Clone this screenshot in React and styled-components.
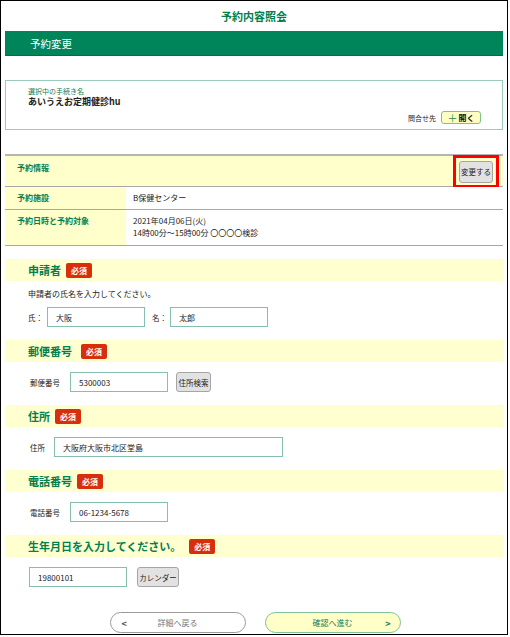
import React from 'react';
import styled, { createGlobalStyle } from 'styled-components';

const GlobalStyle = createGlobalStyle`
  body {
    margin: 0;
    background: #fff;
    font-family: "Noto Sans CJK JP", "Noto Sans", sans-serif;
    color: #222;
  }
`;

const Frame = styled.div`
  box-sizing: border-box;
  width: 508px;
  height: 635px;
  border: 1px solid #000;
  padding: 0 4px;
  overflow: hidden;
`;

const PageTitle = styled.h1`
  margin: 0;
  height: 30px;
  display: flex;
  align-items: center;
  justify-content: center;
  font-size: 11px;
  font-weight: 700;
  color: #00804f;
`;

const Banner = styled.div`
  height: 24px;
  background: #00845a;
  border-bottom: 1px solid #006d49;
  display: flex;
  align-items: center;
  padding-left: 25px;
  color: #fff;
  font-size: 10.5px;
  margin-bottom: 24px;
`;

const ProcBox = styled.div`
  box-sizing: border-box;
  height: 50px;
  border: 1px solid #9ccbbe;
  padding: 6px 22px 0 22px;
  display: flex;
  flex-direction: column;
  margin-bottom: 24px;
`;

const ProcLabel = styled.div`
  font-size: 7px;
  color: #1a7a55;
  line-height: 9px;
`;

const ProcName = styled.div`
  font-size: 9px;
  font-weight: 700;
  line-height: 12px;
`;

const ContactRow = styled.div`
  margin-top: auto;
  margin-bottom: 5px;
  margin-right: -1px;
  display: flex;
  justify-content: flex-end;
  align-items: center;
  gap: 5px;
  font-size: 7px;
`;

const OpenButton = styled.button`
  box-sizing: border-box;
  width: 40px;
  height: 13px;
  padding: 0;
  background: #ffffc4;
  border: 1px solid #7fc08f;
  border-radius: 3px;
  font-family: inherit;
  font-size: 8px;
  font-weight: 700;
  color: #111;
  display: flex;
  align-items: center;
  justify-content: center;
  gap: 1px;

  span {
    color: #1a8a4a;
    font-weight: 400;
    font-size: 10px;
  }
`;

const InfoTable = styled.div`
  border-top: 2px solid #b5b5b5;
  margin-bottom: 13px;
`;

const InfoRow = styled.div`
  box-sizing: border-box;
  display: grid;
  grid-template-columns: 121px 1fr;
  height: ${(p) => p.$h}px;
  border-bottom: 1px solid #a8a8a8;
  font-size: 8px;
`;

const HeaderRow = styled.div`
  box-sizing: border-box;
  height: 31px;
  background: #ffffcc;
  border-bottom: 1px solid #a8a8a8;
  display: flex;
  align-items: flex-start;
  justify-content: space-between;
  padding: 0 4px 0 12px;
`;

const HeadLabel = styled.div`
  font-size: 8px;
  font-weight: 700;
  color: #00804f;
  padding-top: 6px;
`;

const Cell = styled.div`
  padding: 5px 12px 0;
  line-height: 12px;
  background: ${(p) => (p.$label ? '#ffffcc' : '#fff')};
  color: ${(p) => (p.$label ? '#00804f' : '#222')};
  font-weight: ${(p) => (p.$label ? 700 : 400)};
  padding-left: ${(p) => (p.$label ? 12 : 7)}px;
`;

const Highlight = styled.div`
  margin-top: -1px;
  border: 3px solid #f00;
  box-sizing: border-box;
  width: 46px;
  height: 33px;
  display: flex;
  align-items: center;
  justify-content: center;
`;

const GrayButton = styled.button`
  box-sizing: border-box;
  width: ${(p) => p.$w}px;
  height: ${(p) => p.$h || 20}px;
  padding: 0;
  background: #e2e2e2;
  border: 1px solid #a5a5a5;
  border-radius: 3px;
  font-family: inherit;
  font-size: 7.5px;
  color: #222;
`;

const Section = styled.section`
  margin-bottom: 13px;
`;

const SectionHead = styled.h2`
  margin: 0;
  height: 22px;
  background: #ffffd0;
  display: flex;
  align-items: center;
  gap: 5px;
  padding-left: 23px;
  font-size: 11px;
  font-weight: 700;
  color: #00804f;
`;

const Badge = styled.span`
  background: #d72f0c;
  color: #fff;
  font-size: 8px;
  font-weight: 700;
  padding: 1px 5px;
  border-radius: 2px;
  line-height: 13px;
  margin-left: ${(p) => p.$gap || 0}px;
`;

const Body = styled.div`
  padding: ${(p) => p.$top || 10}px 0 0 ${(p) => p.$left || 25}px;
  font-size: 8px;
`;

const Note = styled.p`
  margin: 0 0 8px;
  font-size: 8px;
  line-height: 10px;
`;

const FieldRow = styled.div`
  display: flex;
  align-items: center;
`;

const FieldLabel = styled.label`
  font-size: 7.5px;
  width: ${(p) => p.$w}px;
`;

const TextInput = styled.input`
  box-sizing: border-box;
  width: ${(p) => p.$w || 98}px;
  height: 20px;
  border: 1px solid #86bfae;
  padding: 0 8px;
  font-family: inherit;
  font-size: 8px;
  color: #222;
  margin-right: ${(p) => p.$mr || 0}px;
  outline: none;
`;

const Nav = styled.div`
  display: flex;
  justify-content: center;
  gap: 19px;
  margin-top: 25px;
  padding-left: 2px;
`;

const NavButton = styled.button`
  box-sizing: border-box;
  position: relative;
  width: 136px;
  height: 21px;
  border-radius: 11px;
  font-family: inherit;
  font-size: 8px;
  border: 1px solid ${(p) => (p.$next ? '#7fbf9a' : '#9a9a9a')};
  background: ${(p) => (p.$next ? '#ffffc8' : '#fff')};
  color: ${(p) => (p.$next ? '#1a7a55' : '#777')};
`;

const Arrow = styled.span`
  position: absolute;
  top: 50%;
  transform: translateY(-50%);
  font-size: 9px;
  font-weight: 700;
  color: ${(p) => (p.$next ? '#1a7a55' : '#555')};
  ${(p) => (p.$next ? 'right: 9px;' : 'left: 11px;')}
`;

export default function App() {
  return (
    <>
      <GlobalStyle />
      <Frame>
        <PageTitle>予約内容照会</PageTitle>
        <Banner>予約変更</Banner>

        <ProcBox>
          <ProcLabel>選択中の手続き名</ProcLabel>
          <ProcName>あいうえお定期健診hu</ProcName>
          <ContactRow>
            問合せ先
            <OpenButton>
              <span>＋</span>開く
            </OpenButton>
          </ContactRow>
        </ProcBox>

        <InfoTable>
          <HeaderRow>
            <HeadLabel>予約情報</HeadLabel>
            <Highlight>
              <GrayButton $w={34} $h={22}>変更する</GrayButton>
            </Highlight>
          </HeaderRow>
          <InfoRow $h={23}>
            <Cell $label>予約施設</Cell>
            <Cell>B保健センター</Cell>
          </InfoRow>
          <InfoRow $h={36}>
            <Cell $label>予約日時と予約対象</Cell>
            <Cell>
              2021年04月06日(火)
              <br />
              14時00分～15時00分 〇〇〇〇検診
            </Cell>
          </InfoRow>
        </InfoTable>

        <Section>
          <SectionHead>
            申請者<Badge>必須</Badge>
          </SectionHead>
          <Body $top={8} $left={23}>
            <Note>申請者の氏名を入力してください。</Note>
            <FieldRow>
              <FieldLabel $w={19}>氏：</FieldLabel>
              <TextInput defaultValue="大阪" $mr={7} />
              <FieldLabel $w={18}>名：</FieldLabel>
              <TextInput defaultValue="太郎" />
            </FieldRow>
          </Body>
        </Section>

        <Section>
          <SectionHead>
            郵便番号<Badge $gap={4}>必須</Badge>
          </SectionHead>
          <Body>
            <FieldRow>
              <FieldLabel $w={40}>郵便番号</FieldLabel>
              <TextInput defaultValue="5300003" $mr={8} />
              <GrayButton $w={35}>住所検索</GrayButton>
            </FieldRow>
          </Body>
        </Section>

        <Section>
          <SectionHead>
            住所<Badge>必須</Badge>
          </SectionHead>
          <Body>
            <FieldRow>
              <FieldLabel $w={24}>住所</FieldLabel>
              <TextInput defaultValue="大阪府大阪市北区堂島" $w={229} />
            </FieldRow>
          </Body>
        </Section>

        <Section>
          <SectionHead>
            電話番号<Badge>必須</Badge>
          </SectionHead>
          <Body>
            <FieldRow>
              <FieldLabel $w={40}>電話番号</FieldLabel>
              <TextInput defaultValue="06-1234-5678" />
            </FieldRow>
          </Body>
        </Section>

        <Section>
          <SectionHead>
            生年月日を入力してください。<Badge $gap={3}>必須</Badge>
          </SectionHead>
          <Body $left={24}>
            <FieldRow>
              <TextInput defaultValue="19800101" $mr={10} />
              <GrayButton $w={42}>カレンダー</GrayButton>
            </FieldRow>
          </Body>
        </Section>

        <Nav>
          <NavButton>
            <Arrow>&lt;</Arrow>
            詳細へ戻る
          </NavButton>
          <NavButton $next>
            確認へ進む
            <Arrow $next>&gt;</Arrow>
          </NavButton>
        </Nav>
      </Frame>
    </>
  );
}
